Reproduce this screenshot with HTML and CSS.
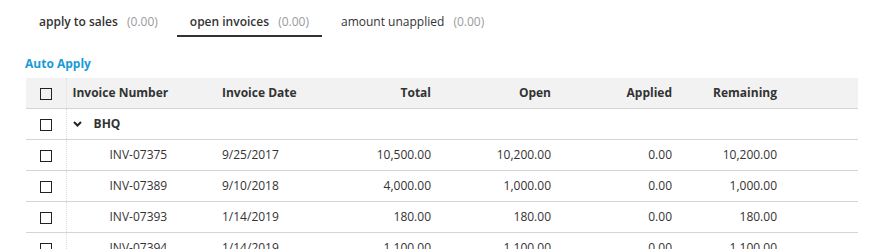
FILE: index.html
```html
<!DOCTYPE html>
<html lang="en">
<head>
    <meta charset="UTF-8">
    <meta name="viewport" content="width=device-width, initial-scale=1.0">
    <title>Open Invoices</title>
    <link rel="stylesheet" href="styles.css">
</head>
<body>
    <div class="tabs">
        <div class="tab tab-strong">apply to sales <span class="tab-amount">(0.00)</span></div>
        <div class="tab tab-strong active">open invoices <span class="tab-amount">(0.00)</span></div>
        <div class="tab">amount unapplied <span class="tab-amount">(0.00)</span></div>
    </div>

    <a class="auto-apply" href="#">Auto Apply</a>

    <table class="invoices">
        <colgroup>
            <col class="col-check">
            <col class="col-number">
            <col class="col-date">
            <col class="col-total">
            <col class="col-open">
            <col class="col-applied">
            <col class="col-remaining">
            <col>
        </colgroup>
        <thead>
            <tr>
                <th class="check"><span class="box"></span></th>
                <th class="first">Invoice Number</th>
                <th>Invoice Date</th>
                <th class="num">Total</th>
                <th class="num">Open</th>
                <th class="num">Applied</th>
                <th class="num">Remaining</th>
                <th></th>
            </tr>
        </thead>
        <tbody>
            <tr class="group">
                <td class="check"><span class="box"></span></td>
                <td class="first" colspan="2">
                    <svg class="chevron" width="9" height="6" viewBox="0 0 9 6"><polyline points="1,1 4.5,4.5 8,1" fill="none" stroke="#222" stroke-width="2"/></svg>
                    BHQ
                </td>
                <td></td><td></td><td></td><td></td><td></td>
            </tr>
            <tr>
                <td class="check"><span class="box"></span></td>
                <td class="first child">INV-07375</td>
                <td>9/25/2017</td>
                <td class="num">10,500.00</td>
                <td class="num">10,200.00</td>
                <td class="num">0.00</td>
                <td class="num">10,200.00</td>
                <td></td>
            </tr>
            <tr>
                <td class="check"><span class="box"></span></td>
                <td class="first child">INV-07389</td>
                <td>9/10/2018</td>
                <td class="num">4,000.00</td>
                <td class="num">1,000.00</td>
                <td class="num">0.00</td>
                <td class="num">1,000.00</td>
                <td></td>
            </tr>
            <tr>
                <td class="check"><span class="box"></span></td>
                <td class="first child">INV-07393</td>
                <td>1/14/2019</td>
                <td class="num">180.00</td>
                <td class="num">180.00</td>
                <td class="num">0.00</td>
                <td class="num">180.00</td>
                <td></td>
            </tr>
            <tr>
                <td class="check"><span class="box"></span></td>
                <td class="first child">INV-07394</td>
                <td>1/14/2019</td>
                <td class="num">1,100.00</td>
                <td class="num">1,100.00</td>
                <td class="num">0.00</td>
                <td class="num">1,100.00</td>
                <td></td>
            </tr>
        </tbody>
    </table>
</body>
</html>
```

FILE: styles.css
```css
body {
    margin: 0;
    font-family: "Open Sans", "Liberation Sans", sans-serif;
    font-size: 12px;
    color: #333;
    background: #fff;
}

.tabs {
    display: flex;
    gap: 6px;
    padding: 8px 0 0 26px;
}

.tab {
    padding: 5px 13px 4px;
    line-height: 18px;
    border-bottom: 2px solid transparent;
    color: #333;
}

.tab-strong {
    font-weight: 600;
}

.tab.active {
    border-bottom-color: #333;
}

.tab-amount {
    font-weight: 400;
    color: #999;
    margin-left: 6px;
}

.auto-apply {
    display: block;
    margin: 18px 0 5px 25px;
    line-height: 18px;
    font-weight: 700;
    color: #1a9ad6;
    text-decoration: none;
}

.invoices {
    margin-left: 26px;
    width: 832px;
    border-collapse: collapse;
    table-layout: fixed;
}

.col-check { width: 40px; }
.col-number { width: 150px; }
.col-date { width: 100px; }
.col-total { width: 121px; }
.col-open { width: 120px; }
.col-applied { width: 121px; }
.col-remaining { width: 105px; }

.invoices th,
.invoices td {
    height: 28px;
    padding: 0 6px 2px;
    text-align: left;
    border-bottom: 1px solid #d4d4d4;
    white-space: nowrap;
}

.invoices thead th {
    background: #f2f2f2;
    font-weight: 700;
    color: #333;
}

.invoices .num {
    text-align: right;
}

.invoices .check {
    text-align: center;
    padding: 0;
    height: 30px;
}

.invoices .first {
    border-left: 1px dotted #ddd;
}

.invoices .child {
    padding-left: 43px;
}

.group td {
    font-weight: 700;
}

.chevron {
    margin: 0 9px 1px 0;
    vertical-align: middle;
}

.box {
    display: inline-block;
    width: 10px;
    height: 10px;
    border: 1px solid #222;
    vertical-align: middle;
}
```
